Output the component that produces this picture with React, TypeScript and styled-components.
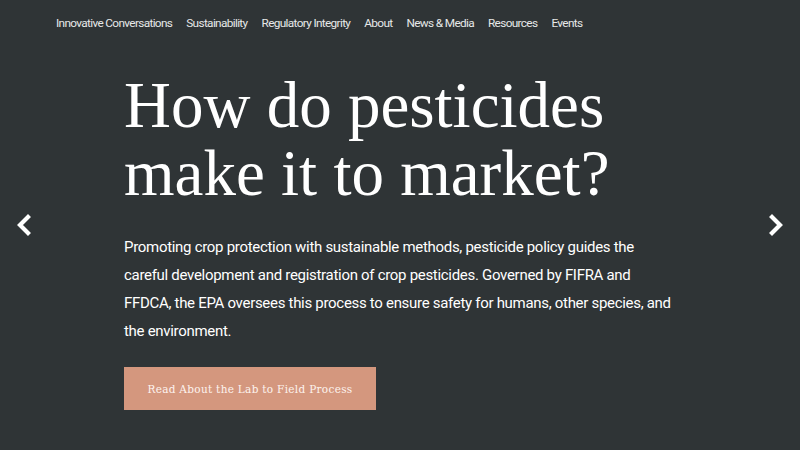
import * as React from "react";
import styled, { createGlobalStyle } from "styled-components";

const COLOR = {
  bg: "#2f3436",
  text: "#ffffff",
  nav: "#e6e8e8",
  button: "#d4977e",
};

const NAV_ITEMS = [
  "Innovative Conversations",
  "Sustainability",
  "Regulatory Integrity",
  "About",
  "News & Media",
  "Resources",
  "Events",
];

const GlobalStyle = createGlobalStyle`
  html, body {
    margin: 0;
    padding: 0;
    background: ${COLOR.bg};
  }
  * { box-sizing: border-box; }
`;

function Chevron(props: { dir: "left" | "right" }) {
  const d = props.dir === "left" ? "M13 3 L5 11 L13 19" : "M5 3 L13 11 L5 19";
  return (
    <svg width="18" height="22" viewBox="0 0 18 22">
      <path d={d} fill="none" stroke="#fff" strokeWidth="4.2" strokeLinecap="square" />
    </svg>
  );
}

export default function App() {
  return (
    <>
      <GlobalStyle />
      <Page>
        <Header>
          <Nav>
            {NAV_ITEMS.map((item) => (
              <NavLink key={item} href="#">
                {item}
              </NavLink>
            ))}
          </Nav>
        </Header>
        <Hero>
          <Arrow aria-label="Previous">
            <Chevron dir="left" />
          </Arrow>
          <Slide>
            <Title>
              How do pesticides
              <br />
              make it to market?
            </Title>
            <Lead>
              Promoting crop protection with sustainable methods, pesticide policy guides the
              careful development and registration of crop pesticides. Governed by FIFRA and
              FFDCA, the EPA oversees this process to ensure safety for humans, other species, and
              the environment.
            </Lead>
            <Button href="#">Read About the Lab to Field Process</Button>
          </Slide>
          <Arrow aria-label="Next">
            <Chevron dir="right" />
          </Arrow>
        </Hero>
      </Page>
    </>
  );
}

const Page = styled.div`
  position: relative;
  width: 800px;
  height: 450px;
  overflow: hidden;
  background: ${COLOR.bg};
  color: ${COLOR.text};
`;

/* transparent header laid over the hero */
const Header = styled.header`
  position: absolute;
  top: 0;
  left: 0;
  right: 0;
  z-index: 2;
`;

const Nav = styled.nav`
  display: flex;
  gap: 14px;
  padding: 15px 56px 0;
`;

const NavLink = styled.a`
  font-family: Roboto, "Liberation Sans", sans-serif;
  font-size: 11.8px;
  line-height: 16px;
  color: ${COLOR.nav};
  text-decoration: none;
  letter-spacing: -0.65px;
`;

const Hero = styled.section`
  display: grid;
  grid-template-columns: 48px 1fr 48px;
  align-items: center;
  height: 450px;
`;

const Arrow = styled.button`
  display: flex;
  justify-content: center;
  align-items: center;
  background: none;
  border: none;
  padding: 0;
  height: 40px;
  cursor: pointer;
`;

const Slide = styled.div`
  align-self: start;
  padding: 71px 0 0 76px;
`;

const Title = styled.h1`
  margin: 0;
  font-family: "Liberation Serif", serif;
  font-weight: normal;
  font-size: 65px;
  line-height: 68px;
`;

const Lead = styled.p`
  margin: 26px 0 0;
  width: 550px;
  font-family: Roboto, "Liberation Sans", sans-serif;
  font-size: 15px;
  line-height: 28px;
  letter-spacing: -0.3px;
  color: ${COLOR.text};
`;

const Button = styled.a`
  display: inline-flex;
  align-items: center;
  justify-content: center;
  margin-top: 22px;
  width: 252px;
  height: 43px;
  background: ${COLOR.button};
  color: #fdf3ee;
  font-family: "DejaVu Serif", "Liberation Serif", serif;
  font-size: 10.5px;
  letter-spacing: 0.3px;
  text-decoration: none;
`;
